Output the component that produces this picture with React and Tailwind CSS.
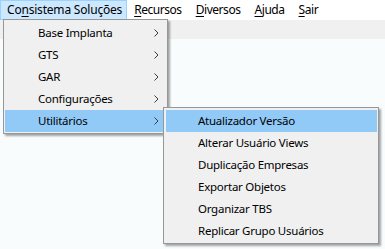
import React from "react";

const font = { fontFamily: '"Noto Sans", "Open Sans", sans-serif' };

const topItems = [
  { label: "Consistema Soluções", key: 2, active: true },
  { label: "Recursos", key: 0 },
  { label: "Diversos", key: 0 },
  { label: "Ajuda", key: 0 },
  { label: "Sair", key: 0 },
];

const mainItems = ["Base Implanta", "GTS", "GAR", "Configurações", "Utilitários"];

const subItems = [
  "Atualizador Versão",
  "Alterar Usuário Views",
  "Duplicação Empresas",
  "Exportar Objetos",
  "Organizar TBS",
  "Replicar Grupo Usuários",
];

function Mnemonic({ label, index }) {
  return (
    <>
      {label.slice(0, index)}
      <span className="underline underline-offset-[2px]">{label[index]}</span>
      {label.slice(index + 1)}
    </>
  );
}

function Chevron() {
  return (
    <svg width="5" height="8" viewBox="0 0 5 8" className="shrink-0">
      <path d="M0.5 0.5 L4 4 L0.5 7.5" fill="none" stroke="#3c3c3c" strokeWidth="1" />
    </svg>
  );
}

export default function App() {
  return (
    <div
      className="relative h-[249px] w-[385px] overflow-hidden bg-[#f8fcfc] text-[11.5px] leading-none tracking-[-0.25px] text-black"
      style={font}
    >
      <nav className="flex h-[20px] items-stretch bg-white text-[12px]">
        {topItems.map((item) => (
          <div
            key={item.label}
            className={
              item.active
                ? "flex items-center border border-[#99d1ff] bg-[#cce8ff] pl-[6px] pr-[4px] tracking-[-0.2px]"
                : "flex items-center border border-transparent px-[6px] tracking-[-0.45px]"
            }
          >
            <Mnemonic label={item.label} index={item.key} />
          </div>
        ))}
      </nav>
      <div className="h-[19px] bg-[#f0f0f0]" />

      <div className="absolute left-[3px] top-[19px] w-[165px] border border-[#979797] bg-[#f0f0f0] pb-[1px] pl-[1px] pr-[1px] pt-[2px] shadow-[2px_2px_2px_rgba(0,0,0,0.35)]">
        {mainItems.map((label, i) => (
          <div
            key={label}
            className={
              "flex h-[22px] items-center justify-between pl-[33px] pr-[7px] " +
              (i === mainItems.length - 1 ? "bg-[#91c9f7]" : "")
            }
          >
            <span>{label}</span>
            <Chevron />
          </div>
        ))}
      </div>

      <div className="absolute left-[163px] top-[107px] w-[216px] border border-[#979797] bg-[#f0f0f0] pb-[1px] pl-[2px] pr-[1px] pt-[2px] shadow-[2px_2px_2px_rgba(0,0,0,0.35)]">
        {subItems.map((label, i) => (
          <div
            key={label}
            className={"flex h-[22px] items-center pl-[32px] " + (i === 0 ? "bg-[#91c9f7]" : "")}
          >
            {label}
          </div>
        ))}
      </div>
    </div>
  );
}
